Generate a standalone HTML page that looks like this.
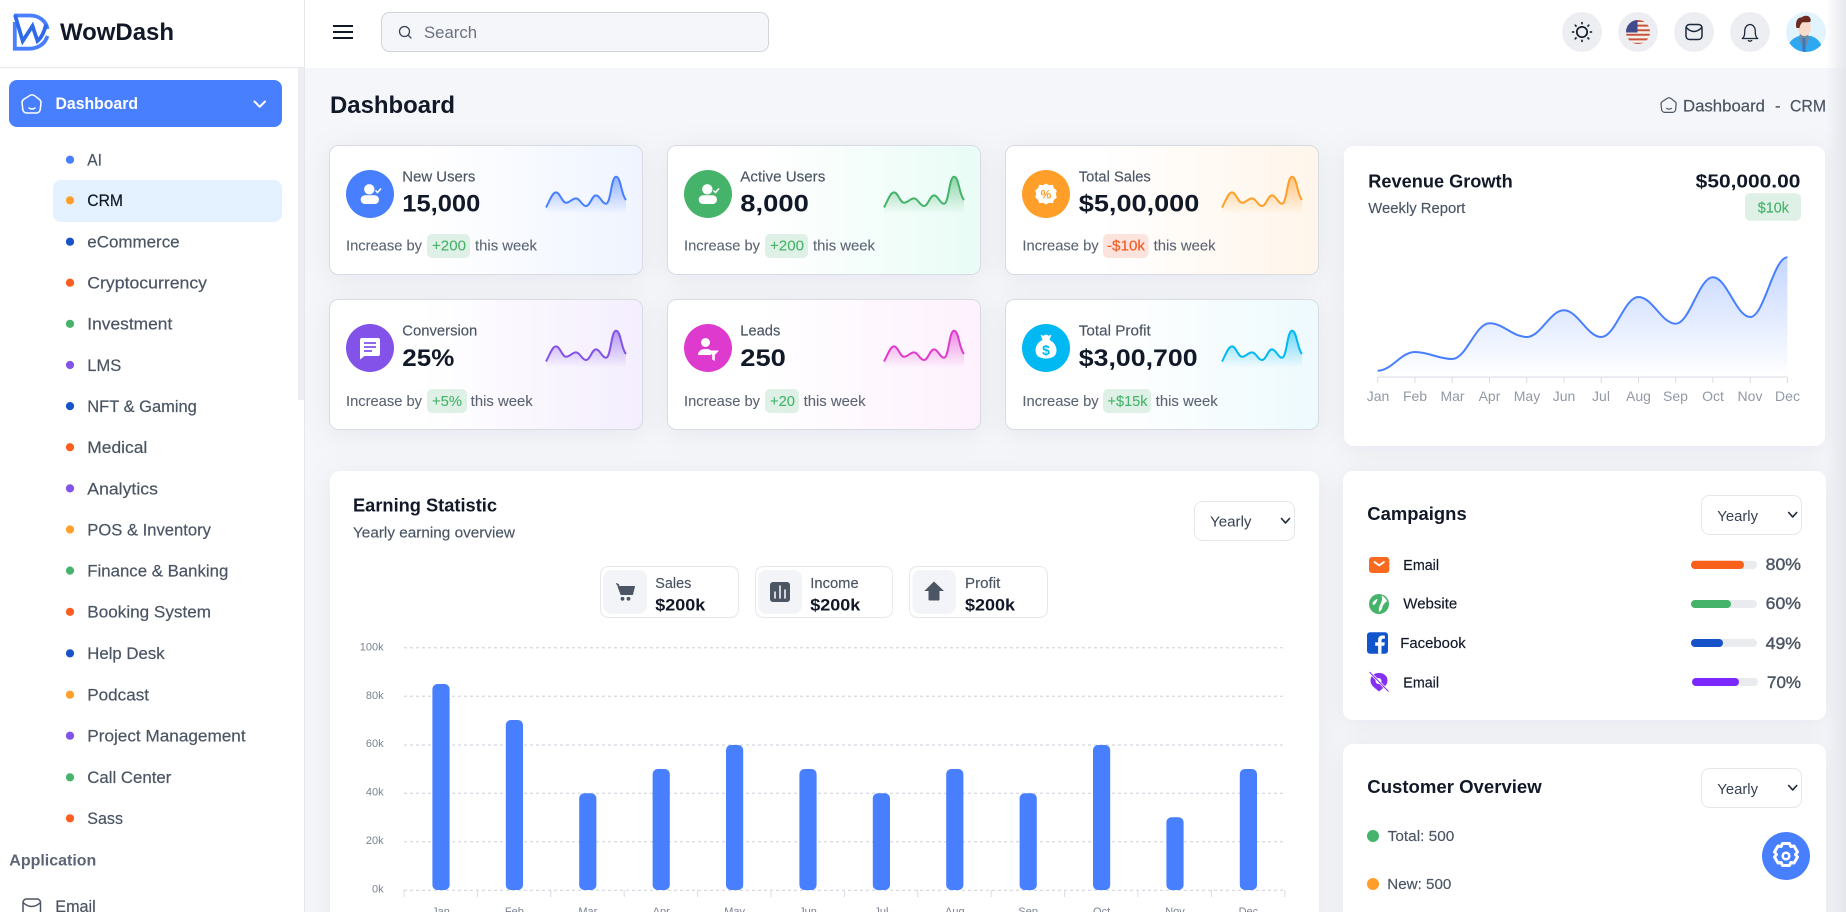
<!DOCTYPE html>
<html lang="en">
<head>
<meta charset="utf-8">
<title>WowDash - CRM Dashboard</title>
<style>
html,body{margin:0;padding:0;width:1846px;height:912px;overflow:hidden;background:#F5F6FA}
svg{display:block}
text{font-family:"Liberation Sans",Arial,sans-serif;white-space:pre}
.nav{font-size:16.5px;fill:#4B5563;stroke:#4B5563;stroke-width:.2px}
.lab{font-size:14.5px;fill:#4B5563;stroke:#4B5563;stroke-width:.15px}
.val{font-size:24.5px;font-weight:700;fill:#111827}
.inc{font-size:14.5px;fill:#5b6472;stroke:#5b6472;stroke-width:.1px}
.h6{font-size:18.5px;font-weight:700;fill:#111827}
.ax{font-size:14px;fill:#9299a5}
.ay{font-size:11px;fill:#7b8291}
.sel{font-size:14.5px;fill:#374151}
.big{font-size:16.5px;font-weight:700;fill:#111827}
.pct{font-size:16.5px;fill:#4B5563;stroke:#4B5563;stroke-width:.4px}
.cmp{font-size:14.5px;fill:#111827;stroke:#111827;stroke-width:.15px}
.gr{fill:#45B369;stroke:#45B369}
.rd{fill:#F2561D;stroke:#F2561D}
.dk{fill:#111827;stroke:#111827}
</style>
</head>
<body>
<svg width="1846" height="912" viewBox="0 0 1846 912" xmlns="http://www.w3.org/2000/svg">
<defs>
<filter id="sh" x="-10%" y="-15%" width="120%" height="130%"><feDropShadow dx="0" dy="4" stdDeviation="14" flood-color="#1f2a44" flood-opacity=".06"/></filter>
<linearGradient id="g1"><stop offset=".3" stop-color="#fff"/><stop offset="1" stop-color="#EFF4FF"/></linearGradient>
<linearGradient id="g2"><stop offset=".3" stop-color="#fff"/><stop offset="1" stop-color="#E9FCF6"/></linearGradient>
<linearGradient id="g3"><stop offset=".3" stop-color="#fff"/><stop offset="1" stop-color="#FFF5EA"/></linearGradient>
<linearGradient id="g4"><stop offset=".3" stop-color="#fff"/><stop offset="1" stop-color="#F4EEFE"/></linearGradient>
<linearGradient id="g5"><stop offset=".3" stop-color="#fff"/><stop offset="1" stop-color="#FDF1FD"/></linearGradient>
<linearGradient id="g6"><stop offset=".3" stop-color="#fff"/><stop offset="1" stop-color="#EEFAFE"/></linearGradient>
<linearGradient id="s1" gradientUnits="userSpaceOnUse" x1="0" y1="0" x2="0" y2="37"><stop offset="0" stop-color="#487FFF" stop-opacity=".55"/><stop offset="1" stop-color="#487FFF" stop-opacity="0"/></linearGradient>
<linearGradient id="s2" gradientUnits="userSpaceOnUse" x1="0" y1="0" x2="0" y2="37"><stop offset="0" stop-color="#45B369" stop-opacity=".55"/><stop offset="1" stop-color="#45B369" stop-opacity="0"/></linearGradient>
<linearGradient id="s3" gradientUnits="userSpaceOnUse" x1="0" y1="0" x2="0" y2="37"><stop offset="0" stop-color="#FF9F29" stop-opacity=".55"/><stop offset="1" stop-color="#FF9F29" stop-opacity="0"/></linearGradient>
<linearGradient id="s4" gradientUnits="userSpaceOnUse" x1="0" y1="0" x2="0" y2="37"><stop offset="0" stop-color="#8252E9" stop-opacity=".55"/><stop offset="1" stop-color="#8252E9" stop-opacity="0"/></linearGradient>
<linearGradient id="s5" gradientUnits="userSpaceOnUse" x1="0" y1="0" x2="0" y2="37"><stop offset="0" stop-color="#DE3ACE" stop-opacity=".55"/><stop offset="1" stop-color="#DE3ACE" stop-opacity="0"/></linearGradient>
<linearGradient id="s6" gradientUnits="userSpaceOnUse" x1="0" y1="0" x2="0" y2="37"><stop offset="0" stop-color="#00B8F2" stop-opacity=".55"/><stop offset="1" stop-color="#00B8F2" stop-opacity="0"/></linearGradient>
<linearGradient id="rev" gradientUnits="userSpaceOnUse" x1="0" y1="257" x2="0" y2="376"><stop offset="0" stop-color="#487FFF" stop-opacity=".32"/><stop offset="1" stop-color="#487FFF" stop-opacity="0"/></linearGradient>
<linearGradient id="edge"><stop offset="0" stop-color="#dfe1e8" stop-opacity="0"/><stop offset="1" stop-color="#dfe1e8" stop-opacity=".8"/></linearGradient>
<path id="sp" d="M0 30.7C3 26 6 15.700 10 15.700C14 15.700 16 26 20 26C24 26 26 21.700 30 21.700C34 21.700 36 29.300 40 29.300C44 29.300 46 18.700 50 18.700C54 18.700 56 27 60 27C65 27 65 0 70 0C75 0 75 18 80 23.300"/>
<path id="spf" d="M0 30.7C3 26 6 15.700 10 15.700C14 15.700 16 26 20 26C24 26 26 21.700 30 21.700C34 21.700 36 29.300 40 29.300C44 29.300 46 18.700 50 18.700C54 18.700 56 27 60 27C65 27 65 0 70 0C75 0 75 18 80 23.300V37H0Z"/>
<g id="home"><path d="M29.500 95.700a4 4 0 0 1 5 0l5 3.800a4 4 0 0 1 1.500 3l-.8 7a4 4 0 0 1-4 3.500h-9.400a4 4 0 0 1-4-3.500l-.8-7a4 4 0 0 1 1.500-3z" fill="none" stroke="currentColor" stroke-width="1.500"/><path d="M29 108q3 2 6 0" fill="none" stroke="currentColor" stroke-width="1.500" stroke-linecap="round"/></g>
<path id="chev" d="M-4-2.200L0 2.200L4-2.200" fill="none" stroke="#1f2937" stroke-width="1.600" stroke-linecap="round" stroke-linejoin="round"/>
<g id="user"><circle cx="-.7" cy="-4.700" r="5.200" fill="#fff"/><rect x="-9.300" y="1.300" width="18.300" height="8.700" rx="4.300" fill="#fff"/><path d="M5.500-3.500L7.500-1.500L11-5.500" fill="none" stroke="#fff" stroke-width="1.500"/></g>
</defs>

<rect width="1846" height="912" fill="#F5F6FA"/>

<!-- Header -->
<rect x="304" y="0" width="1542" height="68" fill="#fff"/>
<path d="M333 26H353M333 32H353M333 38H353" stroke="#111827" stroke-width="2"/>
<rect x="381.500" y="12.500" width="387" height="39" rx="8" fill="#F5F6FA" stroke="#D1D5DB"/>
<circle cx="404.500" cy="31.500" r="5" fill="none" stroke="#374151" stroke-width="1.300"/><path d="M408.300 35.300L411 38" stroke="#374151" stroke-width="1.300" stroke-linecap="round"/>
<text x="424" y="38" font-size="16.500" fill="#6B7280" textLength="53" lengthAdjust="spacingAndGlyphs">Search</text>

<circle cx="1582" cy="32" r="20" fill="#ECEEF2"/>
<circle cx="1582" cy="32" r="5.200" fill="none" stroke="#111827" stroke-width="1.700"/>
<path d="M1582 22.600v1M1582 40.400v1M1572.600 32h1M1590.400 32h1M1575.300 25.300l.7.7M1588 38l.7.7M1575.300 38.700l.7-.7M1588 26l.7-.7" stroke="#1f2937" stroke-width="1.800" stroke-linecap="round"/>

<circle cx="1638" cy="32" r="20" fill="#ECEEF2"/>
<clipPath id="fl"><circle cx="1638" cy="32" r="12"/></clipPath>
<g clip-path="url(#fl)"><rect x="1626" y="20" width="24" height="24" fill="#f6f0ec"/>
<path d="M1626 21h24M1626 25.600h24M1626 30.200h24M1626 34.800h24M1626 39.400h24M1626 43.700h24" stroke="#C8563E" stroke-width="2"/>
<rect x="1626" y="20" width="11.500" height="12.500" fill="#3F4B8D"/></g>

<circle cx="1694" cy="32" r="20" fill="#ECEEF2"/>
<rect x="1686" y="24.500" width="16" height="15" rx="3.500" fill="none" stroke="#1E293B" stroke-width="1.500"/>
<path d="M1686.200 27.500q7.800 8 15.600 0" fill="none" stroke="#1E293B" stroke-width="1.500"/>

<circle cx="1750" cy="32" r="20" fill="#ECEEF2"/>
<path d="M1743.800 36.800c1.200-2 .8-5 1-7 .3-2.800 2.500-5.300 5.200-5.300s4.900 2.500 5.200 5.300c.2 2-.2 5 1 7 .5.800 1 1.400 1.500 1.700h-15.400c.5-.3 1-.9 1.500-1.700z" fill="none" stroke="#1E293B" stroke-width="1.300" stroke-linejoin="round"/>
<path d="M1748.300 40.500q1.700 1.300 3.400 0" fill="none" stroke="#1E293B" stroke-width="1.300" stroke-linecap="round"/>

<clipPath id="av"><circle cx="1806" cy="32" r="20"/></clipPath>
<g clip-path="url(#av)"><rect x="1786" y="12" width="40" height="40" fill="#E1F3FD"/>
<path d="M1787 53c0-11 6-15 12-17h12c6 2 11 6 12 17z" fill="#2EA8F1"/>
<path d="M1800 33h8l1 6-5 13-5-13z" fill="#6E8CA5"/>
<rect x="1802.500" y="38" width="3" height="14" fill="#3B78C0"/>
<ellipse cx="1804.500" cy="28" rx="6.500" ry="8" fill="#F7DCCB"/>
<path d="M1796.500 28c-1.500-6 1-11 5-10.500 2-2 6-2.500 8-.5 1 1.500 2 3.500 .5 5-2.500.5-6.500 0-8 .5-1 1.500-2 2.500-2.500 5.500z" fill="#6B2B22"/></g>

<!-- Sidebar -->
<rect x="0" y="0" width="304" height="912" fill="#fff"/>
<rect x="304" y="0" width="1" height="912" fill="#E5E7EB"/>
<rect x="0" y="67" width="304" height="1.300" fill="#E8EAEE"/>
<rect x="298" y="68" width="6" height="332" fill="#ECEEF2"/>
<g fill="none" stroke="#487FFF" stroke-width="3.800">
<path d="M14 15.500H30C40 15.500 46.500 22 47.500 29"/>
<path d="M14.800 22V48.700H29C38 48.700 45 44 47.500 36"/>
<path d="M15 15L22.700 41L32.500 26L37.500 41C41.500 37.500 44.500 31 46 24.500" stroke="#2f6be8"/>
</g>
<text x="60" y="40" font-size="24" font-weight="700" fill="#111827" textLength="114" lengthAdjust="spacingAndGlyphs">WowDash</text>

<rect x="9" y="80" width="273" height="47" rx="8" fill="#487FFF"/>
<use href="#home" style="color:#fff"/>
<text x="55.500" y="109" font-size="16.500" font-weight="700" fill="#fff" textLength="82.500" lengthAdjust="spacingAndGlyphs">Dashboard</text>
<path d="M254.500 101.500L259.700 106.800L265 101.500" fill="none" stroke="#fff" stroke-width="2" stroke-linecap="round" stroke-linejoin="round"/>

<rect x="53" y="180" width="229" height="42" rx="8" fill="#E4F1FF"/>

<g>
<circle cx="70" cy="159.700" r="4.100" fill="#487FFF"/><text x="87.300" y="165.300" class="nav" textLength="14.700" lengthAdjust="spacingAndGlyphs">AI</text>
<circle cx="70" cy="200.300" r="4.100" fill="#FF9F29"/><text x="87.300" y="206.200" class="nav dk" textLength="35.700" lengthAdjust="spacingAndGlyphs">CRM</text>
<circle cx="70" cy="241.700" r="4.100" fill="#1653C8"/><text x="87.300" y="247.600" class="nav" textLength="92.300" lengthAdjust="spacingAndGlyphs">eCommerce</text>
<circle cx="70" cy="282.700" r="4.100" fill="#FB5E1E"/><text x="87.300" y="288.600" class="nav" textLength="119.700" lengthAdjust="spacingAndGlyphs">Cryptocurrency</text>
<circle cx="70" cy="323.800" r="4.100" fill="#45B369"/><text x="87.300" y="329.700" class="nav" textLength="85" lengthAdjust="spacingAndGlyphs">Investment</text>
<circle cx="70" cy="365" r="4.100" fill="#8252E9"/><text x="87.300" y="370.900" class="nav" textLength="34" lengthAdjust="spacingAndGlyphs">LMS</text>
<circle cx="70" cy="406.100" r="4.100" fill="#1653C8"/><text x="87.300" y="412" class="nav" textLength="109.500" lengthAdjust="spacingAndGlyphs">NFT &amp; Gaming</text>
<circle cx="70" cy="447.200" r="4.100" fill="#FB5E1E"/><text x="87.300" y="453.100" class="nav" textLength="60" lengthAdjust="spacingAndGlyphs">Medical</text>
<circle cx="70" cy="488.400" r="4.100" fill="#8252E9"/><text x="87.300" y="494.300" class="nav" textLength="70.600" lengthAdjust="spacingAndGlyphs">Analytics</text>
<circle cx="70" cy="529.500" r="4.100" fill="#FF9F29"/><text x="87.300" y="535.400" class="nav" textLength="123.600" lengthAdjust="spacingAndGlyphs">POS &amp; Inventory</text>
<circle cx="70" cy="570.600" r="4.100" fill="#45B369"/><text x="87.300" y="576.500" class="nav" textLength="141" lengthAdjust="spacingAndGlyphs">Finance &amp; Banking</text>
<circle cx="70" cy="611.800" r="4.100" fill="#FB5E1E"/><text x="87.300" y="617.700" class="nav" textLength="123.700" lengthAdjust="spacingAndGlyphs">Booking System</text>
<circle cx="70" cy="653.300" r="4.100" fill="#1653C8"/><text x="87.300" y="659.200" class="nav" textLength="77.300" lengthAdjust="spacingAndGlyphs">Help Desk</text>
<circle cx="70" cy="694.700" r="4.100" fill="#FF9F29"/><text x="87.300" y="700.600" class="nav" textLength="61.700" lengthAdjust="spacingAndGlyphs">Podcast</text>
<circle cx="70" cy="735.700" r="4.100" fill="#8252E9"/><text x="87.300" y="741.600" class="nav" textLength="158.300" lengthAdjust="spacingAndGlyphs">Project Management</text>
<circle cx="70" cy="777.300" r="4.100" fill="#45B369"/><text x="87.300" y="783.200" class="nav" textLength="84" lengthAdjust="spacingAndGlyphs">Call Center</text>
<circle cx="70" cy="818.300" r="4.100" fill="#FB5E1E"/><text x="87.300" y="824.200" class="nav" textLength="35.700" lengthAdjust="spacingAndGlyphs">Sass</text>
</g>
<text x="9.300" y="865.700" font-size="16" font-weight="700" fill="#5D6676" textLength="87" lengthAdjust="spacingAndGlyphs">Application</text>
<rect x="23" y="899" width="17.500" height="17" rx="3.500" fill="none" stroke="#4B5563" stroke-width="1.500"/>
<path d="M23 902.500q8.700 8 17.500 0" fill="none" stroke="#4B5563" stroke-width="1.500"/>
<text x="55.300" y="912" class="nav" textLength="40.400" lengthAdjust="spacingAndGlyphs">Email</text>

<!-- Title + breadcrumb -->
<text x="330" y="113" font-size="24" font-weight="700" fill="#111827" textLength="125" lengthAdjust="spacingAndGlyphs">Dashboard</text>
<use href="#home" transform="translate(1643.400 22) scale(.8)" style="color:#4B5563"/>
<text x="1683" y="111.500" class="nav" textLength="82" lengthAdjust="spacingAndGlyphs">Dashboard</text>
<text x="1775" y="111.500" class="nav">-</text>
<text x="1790" y="111.500" class="nav" textLength="36" lengthAdjust="spacingAndGlyphs">CRM</text>

<!-- Stat cards -->
<g filter="url(#sh)" stroke="#D8DBE2">
<rect x="329.500" y="145.500" width="313" height="129" rx="9" fill="url(#g1)"/>
<rect x="667.500" y="145.500" width="313" height="129" rx="9" fill="url(#g2)"/>
<rect x="1005.500" y="145.500" width="313" height="129" rx="9" fill="url(#g3)"/>
<rect x="329.500" y="299.500" width="313" height="130" rx="9" fill="url(#g4)"/>
<rect x="667.500" y="299.500" width="313" height="130" rx="9" fill="url(#g5)"/>
<rect x="1005.500" y="299.500" width="313" height="130" rx="9" fill="url(#g6)"/>
</g>

<!-- card 1 -->
<circle cx="370" cy="194" r="24" fill="#487FFF"/><use href="#user" x="370" y="194"/>
<text x="402.300" y="181.300" class="lab" textLength="73" lengthAdjust="spacingAndGlyphs">New Users</text>
<text x="402.300" y="211.700" class="val" textLength="78" lengthAdjust="spacingAndGlyphs">15,000</text>
<g transform="translate(546 176.700)"><use href="#spf" fill="url(#s1)"/><use href="#sp" fill="none" stroke="#487FFF" stroke-width="2"/></g>
<text x="346" y="250.700" class="inc" textLength="76" lengthAdjust="spacingAndGlyphs">Increase by</text>
<rect x="427" y="234" width="43" height="24" rx="5" fill="#DFF1E6"/>
<text x="432" y="250.700" class="inc gr" textLength="34" lengthAdjust="spacingAndGlyphs">+200</text>
<text x="475" y="250.700" class="inc" textLength="62" lengthAdjust="spacingAndGlyphs">this week</text>

<!-- card 2 -->
<circle cx="708" cy="194" r="24" fill="#45B369"/><use href="#user" x="708" y="194"/>
<text x="740.300" y="181.300" class="lab" textLength="85" lengthAdjust="spacingAndGlyphs">Active Users</text>
<text x="740.300" y="211.700" class="val" textLength="68.500" lengthAdjust="spacingAndGlyphs">8,000</text>
<g transform="translate(884 176.700)"><use href="#spf" fill="url(#s2)"/><use href="#sp" fill="none" stroke="#45B369" stroke-width="2"/></g>
<text x="684" y="250.700" class="inc" textLength="76" lengthAdjust="spacingAndGlyphs">Increase by</text>
<rect x="765" y="234" width="43" height="24" rx="5" fill="#DFF1E6"/>
<text x="770" y="250.700" class="inc gr" textLength="34" lengthAdjust="spacingAndGlyphs">+200</text>
<text x="813" y="250.700" class="inc" textLength="62" lengthAdjust="spacingAndGlyphs">this week</text>

<!-- card 3 -->
<circle cx="1046" cy="194" r="24" fill="#FF9F29"/>
<path d="M1046 183.500l3.200 1.700 3.600-.4 1.200 3.400 2.800 2.300-1 3.500 1 3.500-2.800 2.300-1.200 3.400-3.600-.4-3.200 1.700-3.200-1.700-3.600.4-1.200-3.400-2.800-2.300 1-3.500-1-3.500 2.800-2.300 1.200-3.400 3.600.4z" fill="#fff"/>
<text x="1046" y="198.500" font-size="12" font-weight="700" fill="#FF9F29" text-anchor="middle">%</text>
<text x="1078.800" y="181.300" class="lab" textLength="72" lengthAdjust="spacingAndGlyphs">Total Sales</text>
<text x="1078.800" y="211.700" class="val" textLength="120.500" lengthAdjust="spacingAndGlyphs">$5,00,000</text>
<g transform="translate(1222 176.700)"><use href="#spf" fill="url(#s3)"/><use href="#sp" fill="none" stroke="#FF9F29" stroke-width="2"/></g>
<text x="1022.400" y="250.700" class="inc" textLength="76.300" lengthAdjust="spacingAndGlyphs">Increase by</text>
<rect x="1103" y="234" width="45.500" height="24" rx="5" fill="#FDE3DD"/>
<text x="1107" y="250.700" class="inc rd" textLength="38" lengthAdjust="spacingAndGlyphs">-$10k</text>
<text x="1153.600" y="250.700" class="inc" textLength="62" lengthAdjust="spacingAndGlyphs">this week</text>

<!-- card 4 -->
<circle cx="370" cy="348" r="24" fill="#8252E9"/>
<path d="M362 338h16a2 2 0 0 1 2 2v14a2 2 0 0 1-2 2h-13.500l-4.500 3.500V340a2 2 0 0 1 2-2z" fill="#fff"/>
<path d="M364 343h12M364 347h12M364 351h8" stroke="#8252E9" stroke-width="1.800"/>
<text x="402.300" y="335.300" class="lab" textLength="75" lengthAdjust="spacingAndGlyphs">Conversion</text>
<text x="402.300" y="366" class="val" textLength="52" lengthAdjust="spacingAndGlyphs">25%</text>
<g transform="translate(546 330.700)"><use href="#spf" fill="url(#s4)"/><use href="#sp" fill="none" stroke="#8252E9" stroke-width="2"/></g>
<text x="346" y="406" class="inc" textLength="76" lengthAdjust="spacingAndGlyphs">Increase by</text>
<rect x="427" y="389" width="40" height="24" rx="5" fill="#DFF1E6"/>
<text x="432" y="406" class="inc gr" textLength="30" lengthAdjust="spacingAndGlyphs">+5%</text>
<text x="470.700" y="406" class="inc" textLength="62" lengthAdjust="spacingAndGlyphs">this week</text>

<!-- card 5 -->
<circle cx="708" cy="348" r="24" fill="#DE3ACE"/>
<circle cx="705.500" cy="342.500" r="4.500" fill="#fff"/>
<path d="M698 355c0-4 3.500-6 7-6s5 .6 6 1.500v4.500z" fill="#fff"/>
<path d="M708 350.500h11l-4.200 4.500v6l-2.600-1.500v-4.500z" fill="#fff"/>
<text x="740.300" y="335.300" class="lab" textLength="40" lengthAdjust="spacingAndGlyphs">Leads</text>
<text x="740.300" y="366" class="val" textLength="45.600" lengthAdjust="spacingAndGlyphs">250</text>
<g transform="translate(884 330.700)"><use href="#spf" fill="url(#s5)"/><use href="#sp" fill="none" stroke="#DE3ACE" stroke-width="2"/></g>
<text x="684" y="406" class="inc" textLength="76" lengthAdjust="spacingAndGlyphs">Increase by</text>
<rect x="765" y="389" width="34" height="24" rx="5" fill="#DFF1E6"/>
<text x="770" y="406" class="inc gr" textLength="25" lengthAdjust="spacingAndGlyphs">+20</text>
<text x="803.600" y="406" class="inc" textLength="62" lengthAdjust="spacingAndGlyphs">this week</text>

<!-- card 6 -->
<circle cx="1046" cy="348" r="24" fill="#00B8F2"/>
<path d="M1040.500 334.500l2.500 1.300 3-1.300 3 1.300 2.500-1.300-2 5.500c4.500 2 7 6 7 10.500 0 5.500-4.500 8-10.500 8s-10.500-2.500-10.500-8c0-4.500 2.500-8.500 7-10.500z" fill="#fff"/>
<text x="1046" y="355" font-size="14" font-weight="700" fill="#00B8F2" text-anchor="middle">$</text>
<text x="1078.800" y="335.300" class="lab" textLength="72" lengthAdjust="spacingAndGlyphs">Total Profit</text>
<text x="1078.800" y="366" class="val" textLength="118.800" lengthAdjust="spacingAndGlyphs">$3,00,700</text>
<g transform="translate(1222 330.700)"><use href="#spf" fill="url(#s6)"/><use href="#sp" fill="none" stroke="#00B8F2" stroke-width="2"/></g>
<text x="1022.400" y="406" class="inc" textLength="76.300" lengthAdjust="spacingAndGlyphs">Increase by</text>
<rect x="1103" y="389" width="48" height="24" rx="5" fill="#DFF1E6"/>
<text x="1107.500" y="406" class="inc gr" textLength="40" lengthAdjust="spacingAndGlyphs">+$15k</text>
<text x="1155.700" y="406" class="inc" textLength="62" lengthAdjust="spacingAndGlyphs">this week</text>

<!-- White cards -->
<g filter="url(#sh)" fill="#fff">
<rect x="1344" y="146" width="481" height="300" rx="10"/>
<rect x="330" y="471" width="989" height="470" rx="10"/>
<rect x="1343" y="471" width="483" height="249" rx="10"/>
<rect x="1343" y="744" width="483" height="200" rx="10"/>
</g>

<!-- Revenue Growth -->
<text x="1368.300" y="187.700" class="h6" textLength="144.400" lengthAdjust="spacingAndGlyphs">Revenue Growth</text>
<text x="1368.300" y="213" class="lab" textLength="97" lengthAdjust="spacingAndGlyphs">Weekly Report</text>
<text x="1695.700" y="187.700" class="h6" textLength="104.700" lengthAdjust="spacingAndGlyphs">$50,000.00</text>
<rect x="1745" y="193.300" width="56" height="27.400" rx="5" fill="#DFF1E6"/>
<text x="1757.700" y="212.700" class="lab gr" textLength="31.300" lengthAdjust="spacingAndGlyphs">$10k</text>
<path d="M1377.700 370.700C1391.700 370.700 1400.900 352 1414.900 352C1428.900 352 1438.200 359 1452.200 359C1466.200 359 1475.400 323.300 1489.400 323.300C1503.400 323.300 1512.700 337 1526.700 337C1540.700 337 1549.900 310.300 1563.900 310.300C1577.900 310.300 1587.200 337 1601.200 337C1615.200 337 1624.400 297 1638.400 297C1652.400 297 1661.700 323.700 1675.700 323.700C1689.700 323.700 1698.900 277.300 1712.900 277.300C1726.900 277.300 1736.200 317 1750.200 317C1764.200 317 1773.400 257.300 1787.400 257.300V376H1377.700Z" fill="url(#rev)"/>
<path d="M1377.700 370.700C1391.700 370.700 1400.900 352 1414.900 352C1428.900 352 1438.200 359 1452.200 359C1466.200 359 1475.400 323.300 1489.400 323.300C1503.400 323.300 1512.700 337 1526.700 337C1540.700 337 1549.900 310.300 1563.900 310.300C1577.900 310.300 1587.200 337 1601.200 337C1615.200 337 1624.400 297 1638.400 297C1652.400 297 1661.700 323.700 1675.700 323.700C1689.700 323.700 1698.900 277.300 1712.900 277.300C1726.900 277.300 1736.200 317 1750.200 317C1764.200 317 1773.400 257.300 1787.400 257.300" fill="none" stroke="#487FFF" stroke-width="2"/>
<path d="M1377.700 377H1787.400" stroke="#E5E7EB" stroke-width="1.500"/>
<path d="M1377.700 377v6M1414.900 377v6M1452.200 377v6M1489.400 377v6M1526.700 377v6M1563.900 377v6M1601.200 377v6M1638.400 377v6M1675.700 377v6M1712.900 377v6M1750.200 377v6M1787.400 377v6" stroke="#D9DCE2"/>
<g text-anchor="middle">
<text x="1378" y="401" class="ax">Jan</text><text x="1415" y="401" class="ax">Feb</text><text x="1452.500" y="401" class="ax">Mar</text><text x="1489.500" y="401" class="ax">Apr</text><text x="1527" y="401" class="ax">May</text><text x="1564" y="401" class="ax">Jun</text><text x="1601" y="401" class="ax">Jul</text><text x="1638.500" y="401" class="ax">Aug</text><text x="1675.500" y="401" class="ax">Sep</text><text x="1713" y="401" class="ax">Oct</text><text x="1750" y="401" class="ax">Nov</text><text x="1787.500" y="401" class="ax">Dec</text>
</g>

<!-- Earning Statistic -->
<text x="353" y="511.700" class="h6" textLength="144" lengthAdjust="spacingAndGlyphs">Earning Statistic</text>
<text x="353" y="537.700" class="lab" textLength="162" lengthAdjust="spacingAndGlyphs">Yearly earning overview</text>
<rect x="1194.500" y="501.500" width="100" height="39" rx="8" fill="#fff" stroke="#E5E7EB"/>
<text x="1210" y="526.700" class="sel" textLength="41.500" lengthAdjust="spacingAndGlyphs">Yearly</text>
<use href="#chev" x="1285.500" y="520.700"/>

<rect x="600.500" y="566.500" width="138" height="51" rx="8" fill="#fff" stroke="#E5E7EB"/>
<rect x="603.300" y="570" width="43.700" height="43.700" rx="8" fill="#F3F4F8"/>
<path d="M616 583.500l2.500 1 .5 2h15.500l-2 8h-11.500L618 586.500" fill="#4B5563" stroke="#4B5563" stroke-linejoin="round"/>
<circle cx="622.500" cy="598.800" r="1.900" fill="#4B5563"/><circle cx="628.500" cy="598.800" r="1.900" fill="#4B5563"/>
<text x="655.300" y="588" class="lab" textLength="36" lengthAdjust="spacingAndGlyphs">Sales</text>
<text x="655.300" y="610.700" class="big" textLength="50" lengthAdjust="spacingAndGlyphs">$200k</text>

<rect x="755.500" y="566.500" width="137" height="51" rx="8" fill="#fff" stroke="#E5E7EB"/>
<rect x="758.300" y="570" width="43.700" height="43.700" rx="8" fill="#F3F4F8"/>
<rect x="770" y="582" width="20" height="20" rx="3" fill="#4B5563"/>
<path d="M775 592v6M780 586v12M785 590v8" stroke="#fff" stroke-width="1.500" stroke-linecap="round"/>
<text x="810.300" y="588" class="lab" textLength="48.400" lengthAdjust="spacingAndGlyphs">Income</text>
<text x="810.300" y="610.700" class="big" textLength="50" lengthAdjust="spacingAndGlyphs">$200k</text>

<rect x="909.500" y="566.500" width="138" height="51" rx="8" fill="#fff" stroke="#E5E7EB"/>
<rect x="912.300" y="570" width="43.700" height="43.700" rx="8" fill="#F3F4F8"/>
<path d="M934 581.500L944 591H939.500V599.500a1 1 0 0 1-1 1H929.500a1 1 0 0 1-1-1V591H924.300Z" fill="#4B5563"/>
<text x="965" y="588" class="lab" textLength="35.300" lengthAdjust="spacingAndGlyphs">Profit</text>
<text x="965" y="610.700" class="big" textLength="50" lengthAdjust="spacingAndGlyphs">$200k</text>

<g stroke="#DADDE4" stroke-dasharray="3 3" stroke-width="1.400">
<path d="M404 647.700H1284.700"/><path d="M404 696.300H1284.700"/><path d="M404 745H1284.700"/><path d="M404 793.300H1284.700"/><path d="M404 841.700H1284.700"/><path d="M404 890.300H1284.700"/>
</g>
<g text-anchor="end">
<text x="383.600" y="650.500" class="ay">100k</text><text x="383.600" y="699" class="ay">80k</text><text x="383.600" y="747" class="ay">60k</text><text x="383.600" y="795.500" class="ay">40k</text><text x="383.600" y="844" class="ay">20k</text><text x="383.600" y="892.500" class="ay">0k</text>
</g>
<g fill="#487FFF">
<rect x="432.400" y="684" width="17.200" height="206" rx="5"/>
<rect x="505.800" y="720" width="17.200" height="170" rx="5"/>
<rect x="579.200" y="793.300" width="17.200" height="96.700" rx="5"/>
<rect x="652.600" y="769" width="17.200" height="121" rx="5"/>
<rect x="726" y="745" width="17.200" height="145" rx="5"/>
<rect x="799.400" y="769" width="17.200" height="121" rx="5"/>
<rect x="872.800" y="793.300" width="17.200" height="96.700" rx="5"/>
<rect x="946.200" y="769" width="17.200" height="121" rx="5"/>
<rect x="1019.600" y="793.300" width="17.200" height="96.700" rx="5"/>
<rect x="1093" y="745" width="17.200" height="145" rx="5"/>
<rect x="1166.400" y="817.300" width="17.200" height="72.700" rx="5"/>
<rect x="1239.800" y="769" width="17.200" height="121" rx="5"/>
</g>
<path d="M404 890v7M477.400 890v7M550.800 890v7M624.200 890v7M697.600 890v7M771 890v7M844.400 890v7M917.800 890v7M991.200 890v7M1064.600 890v7M1138 890v7M1211.400 890v7M1284.800 890v7" stroke="#D9DCE2"/>
<g text-anchor="middle">
<text x="441" y="915" class="ay">Jan</text><text x="514.400" y="915" class="ay">Feb</text><text x="587.800" y="915" class="ay">Mar</text><text x="661.200" y="915" class="ay">Apr</text><text x="734.600" y="915" class="ay">May</text><text x="808" y="915" class="ay">Jun</text><text x="881.400" y="915" class="ay">Jul</text><text x="954.800" y="915" class="ay">Aug</text><text x="1028.200" y="915" class="ay">Sep</text><text x="1101.600" y="915" class="ay">Oct</text><text x="1175" y="915" class="ay">Nov</text><text x="1248.400" y="915" class="ay">Dec</text>
</g>

<!-- Campaigns -->
<text x="1367.300" y="520" class="h6" textLength="99.400" lengthAdjust="spacingAndGlyphs">Campaigns</text>
<rect x="1701.500" y="495.500" width="100" height="39" rx="8" fill="#fff" stroke="#E5E7EB"/>
<text x="1717.300" y="521" class="sel" textLength="40.700" lengthAdjust="spacingAndGlyphs">Yearly</text>
<use href="#chev" x="1792.700" y="514.700"/>

<rect x="1369" y="557" width="20.300" height="16" rx="3" fill="#F96A1F"/>
<path d="M1374.500 562l4.700 3.500 4.700-3.500" fill="none" stroke="#fff" stroke-width="1.800" stroke-linecap="round"/>
<text x="1403.300" y="570" class="cmp" textLength="35.700" lengthAdjust="spacingAndGlyphs">Email</text>
<rect x="1691" y="560.700" width="66" height="8.300" rx="4" fill="#E9EBEF"/>
<rect x="1691" y="560.700" width="53" height="8.300" rx="4" fill="#F9601A"/>
<text x="1765.700" y="570" class="pct" textLength="35.300" lengthAdjust="spacingAndGlyphs">80%</text>

<circle cx="1379" cy="604" r="10" fill="#45B369"/>
<path d="M1381.500 595.500c2.500 1 5 3.500 5.500 6-2 1-4 3-4.500 5.500-.5 2-1.500 4-3.500 5-.5-3 0-5.500 1.500-8 1.500-3 2-5.500 1-8.500z" fill="#fff"/>
<path d="M1372.500 603c1-2 3-3.500 5-4-.3 2-1.500 4.500-3.500 6-1 0-1.500-1-1.500-2z" fill="#fff"/>
<text x="1403.300" y="608.700" class="cmp" textLength="54" lengthAdjust="spacingAndGlyphs">Website</text>
<rect x="1691" y="600" width="66" height="8" rx="4" fill="#E9EBEF"/>
<rect x="1691" y="600" width="40" height="8" rx="4" fill="#45B369"/>
<text x="1765.700" y="609" class="pct" textLength="35.300" lengthAdjust="spacingAndGlyphs">60%</text>

<rect x="1367" y="632.300" width="21" height="21.400" rx="3" fill="#1155CC"/>
<path d="M1381.500 653.700v-8h2.800l.5-3.300h-3.300v-2c0-1 .5-1.800 1.900-1.800h1.500v-2.900c-.8-.1-1.700-.2-2.500-.2-2.600 0-4.300 1.600-4.300 4.400v2.500h-2.900v3.300h2.900v8z" fill="#fff"/>
<text x="1400.300" y="648" class="cmp" textLength="65.400" lengthAdjust="spacingAndGlyphs">Facebook</text>
<rect x="1691" y="639" width="66" height="8" rx="4" fill="#E9EBEF"/>
<rect x="1691" y="639" width="32" height="8" rx="4" fill="#1653C8"/>
<text x="1765.700" y="649" class="pct" textLength="35.300" lengthAdjust="spacingAndGlyphs">49%</text>

<path d="M1379 673c5 0 8.500 3 8.500 7.500 0 5-4.500 7.500-8.500 11-4-3.500-8.500-6-8.500-11 0-4.500 3.500-7.500 8.500-7.500z" fill="#8330F0"/>
<circle cx="1378.500" cy="681" r="3" fill="#fff"/>
<path d="M1370 672.500L1388 691" stroke="#fff" stroke-width="2.500"/><path d="M1369.500 672L1388.500 691.500" stroke="#8330F0" stroke-width="1"/>
<text x="1403.300" y="687.300" class="cmp" textLength="35.700" lengthAdjust="spacingAndGlyphs">Email</text>
<rect x="1692" y="678" width="66" height="8" rx="4" fill="#E9EBEF"/>
<rect x="1692" y="678" width="47" height="8" rx="4" fill="#7B27FF"/>
<text x="1767" y="688" class="pct" textLength="34" lengthAdjust="spacingAndGlyphs">70%</text>

<!-- Customer Overview -->
<text x="1367.300" y="793" class="h6" textLength="174.400" lengthAdjust="spacingAndGlyphs">Customer Overview</text>
<rect x="1701.500" y="768.500" width="100" height="39" rx="8" fill="#fff" stroke="#E5E7EB"/>
<text x="1717.300" y="794" class="sel" textLength="40.700" lengthAdjust="spacingAndGlyphs">Yearly</text>
<use href="#chev" x="1792.700" y="787.700"/>
<circle cx="1373" cy="836" r="6" fill="#45B369"/>
<text x="1387.700" y="841" class="lab" textLength="66.600" lengthAdjust="spacingAndGlyphs">Total: 500</text>
<circle cx="1373" cy="884" r="6" fill="#FF9F29"/>
<text x="1387.300" y="889" class="lab" textLength="64" lengthAdjust="spacingAndGlyphs">New: 500</text>

<!-- Right edge fade -->
<rect x="1826" y="0" width="20" height="912" fill="url(#edge)"/>

<!-- Settings button -->
<circle cx="1786" cy="856" r="24" fill="#487FFF"/>
<path d="M1782.500 843.500h7l1.300 3 3.200-.5 3.500 6-2 2.500 2 2.500-3.500 6-3.200-.5-1.300 3h-7l-1.300-3-3.200.5-3.500-6 2-2.500-2-2.500 3.500-6 3.200.5z" fill="none" stroke="#fff" stroke-width="3" stroke-linejoin="round"/>
<circle cx="1786" cy="856" r="3.300" fill="none" stroke="#fff" stroke-width="2.500"/>
</svg>
</body>
</html>
